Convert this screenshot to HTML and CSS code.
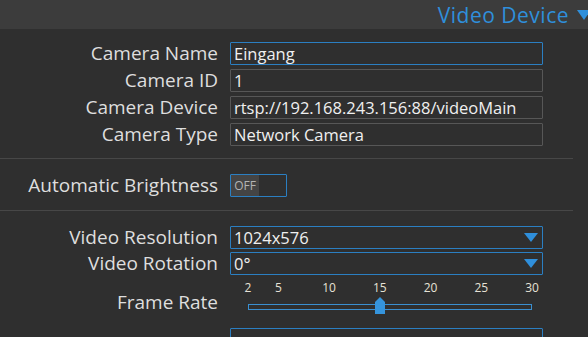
FILE: index.html
```html
<!DOCTYPE html>
<html lang="en">
<head>
    <meta charset="UTF-8">
    <title>Video Device</title>
    <link rel="stylesheet" href="styles.css">
</head>
<body>
    <div class="panel-header">
        <span class="panel-title">Video Device</span>
        <svg class="panel-caret" width="14" height="10" viewBox="0 0 14 10"><path d="M0 0H14L7 10Z" fill="#2f8fdb"/></svg>
    </div>

    <div class="section">
        <div class="row">
            <label class="label">Camera Name</label>
            <input class="field active" type="text" value="Eingang">
        </div>
        <div class="row">
            <label class="label">Camera ID</label>
            <input class="field" type="text" value="1">
        </div>
        <div class="row">
            <label class="label">Camera Device</label>
            <input class="field" type="text" value="rtsp://192.168.243.156:88/videoMain">
        </div>
        <div class="row">
            <label class="label">Camera Type</label>
            <input class="field" type="text" value="Network Camera">
        </div>
    </div>

    <hr class="divider">

    <div class="section section-toggle">
        <div class="row">
            <label class="label">Automatic Brightness</label>
            <div class="toggle">
                <span class="toggle-off">OFF</span>
            </div>
        </div>
    </div>

    <hr class="divider">

    <div class="section section-video">
        <div class="row">
            <label class="label">Video Resolution</label>
            <div class="select">
                <span>1024x576</span>
                <svg width="14" height="9" viewBox="0 0 14 9"><path d="M0 0H14L7 9Z" fill="#2f8fdb"/></svg>
            </div>
        </div>
        <div class="row">
            <label class="label">Video Rotation</label>
            <div class="select">
                <span>0°</span>
                <svg width="14" height="9" viewBox="0 0 14 9"><path d="M0 0H14L7 9Z" fill="#2f8fdb"/></svg>
            </div>
        </div>
        <div class="row row-slider">
            <label class="label">Frame Rate</label>
            <div class="slider">
                <div class="ticks">
                    <span style="left: 0%">2</span>
                    <span style="left: 10.71%">5</span>
                    <span style="left: 28.57%">10</span>
                    <span style="left: 46.43%">15</span>
                    <span style="left: 64.29%">20</span>
                    <span style="left: 82.14%">25</span>
                    <span style="left: 100%">30</span>
                </div>
                <div class="track">
                    <svg class="thumb" style="left: 46.43%" width="10" height="17" viewBox="0 0 10 17"><path d="M0 5L5 0L10 5V17H0Z" fill="#3594dc"/></svg>
                </div>
            </div>
        </div>
        <div class="row">
            <label class="label"></label>
            <input class="field active" type="text" value="">
        </div>
    </div>
</body>
</html>
```

FILE: styles.css
```css
body {
    margin: 0;
    background: #2f2f2f;
    font-family: "Open Sans", "Noto Sans", sans-serif;
    color: #e2e2e2;
    overflow: hidden;
}

.panel-header {
    height: 29px;
    background: #3c3c3c;
    display: flex;
    justify-content: flex-end;
    align-items: center;
    overflow: hidden;
}

.panel-title {
    color: #2f8fdb;
    font-size: 21px;
    letter-spacing: 0.5px;
    margin-right: 8px;
}

.panel-caret {
    flex-shrink: 0;
    margin-right: -3px;
}

.section {
    padding: 13px 0 12px;
    display: flex;
    flex-direction: column;
    gap: 4px;
}

.section-toggle {
    padding: 15px 0 13px;
}

.section-video {
    padding: 15px 0 0;
    gap: 3px;
}

.row {
    display: flex;
    align-items: center;
    gap: 12px;
}

.label {
    width: 218px;
    text-align: right;
    font-size: 19px;
    line-height: 23px;
    flex-shrink: 0;
    color: #dedede;
}

.field {
    box-sizing: border-box;
    width: 313px;
    height: 23px;
    margin: 0;
    padding: 0 3px;
    background: #2f2f2f;
    border: 1px solid #575757;
    border-radius: 1px;
    color: #f0f0f0;
    font-family: "Open Sans", "Noto Sans", sans-serif;
    font-size: 16.5px;
    outline: none;
}

.field.active {
    border-color: #2b7fc2;
}

.divider {
    margin: 0;
    width: 573px;
    height: 1px;
    border: none;
    background: #474747;
}

.toggle {
    box-sizing: border-box;
    width: 57px;
    height: 23px;
    border: 1px solid #2b7fc2;
    border-radius: 1px;
    display: flex;
}

.toggle-off {
    width: 28px;
    background: #444444;
    color: #b4b4b4;
    font-size: 12px;
    line-height: 21px;
    text-align: center;
}

.select {
    box-sizing: border-box;
    width: 313px;
    height: 23px;
    border: 1px solid #2b7fc2;
    border-radius: 1px;
    display: flex;
    align-items: center;
    justify-content: space-between;
    padding: 0 4px 0 3px;
    font-size: 16.5px;
    color: #f0f0f0;
}

.row-slider {
    height: 47px;
    align-items: flex-start;
}

.row-slider .label {
    margin-top: 13px;
}

.slider {
    width: 284px;
    margin-left: 18px;
    padding-top: 3px;
}

.ticks {
    position: relative;
    height: 14px;
    font-size: 12px;
    line-height: 14px;
    color: #e6e2d6;
}

.ticks span {
    position: absolute;
    top: 0;
    transform: translateX(-50%);
}

.track {
    position: relative;
    margin-top: 9px;
    box-sizing: border-box;
    height: 6px;
    border: 1px solid #3a8fd0;
    background: #2f2f2f;
}

.thumb {
    position: absolute;
    top: -8px;
    transform: translateX(-50%);
}
```
